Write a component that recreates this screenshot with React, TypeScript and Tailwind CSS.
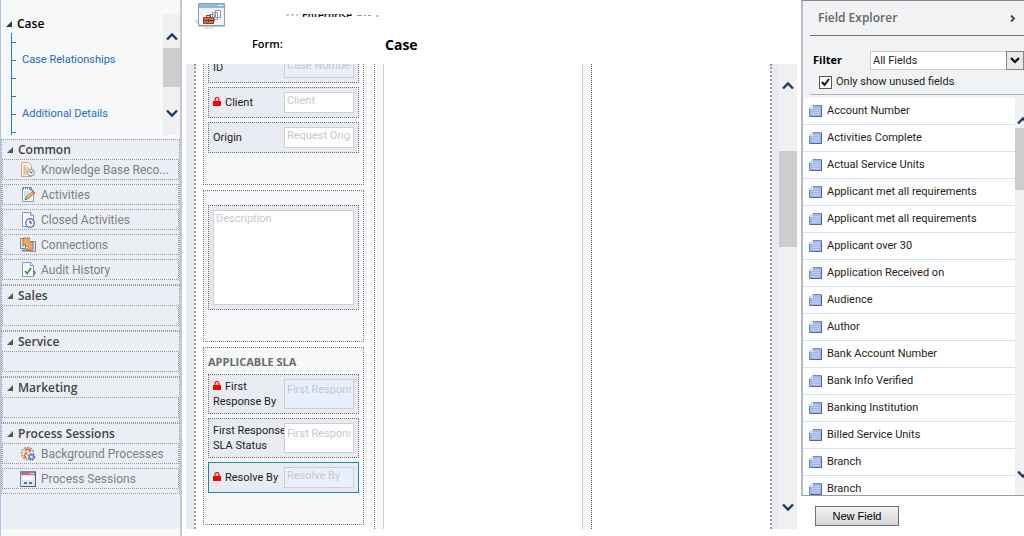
import { useState } from "react";
import type { ReactNode } from "react";

type NavItem = { name: string; icon: ReactNode };
type Field = { id: string; label: string; placeholder: string; locked?: boolean; readOnly?: boolean; tall?: boolean; selected?: boolean };

function Page({ children }: { children?: ReactNode }) {
	return (
		<svg className="h-4 w-4 shrink-0" viewBox="0 0 16 16" fill="none" aria-hidden="true">
			<path d="M2.5.5h8l3 3v11h-11z" fill="#f8fbff" stroke="#8b9ab5" />
			<path d="M10.5.5v3h3" fill="#dbe4f1" stroke="#8b9ab5" />
			{children}
		</svg>
	);
}

const icons = {
	knowledge: (
		<svg className="h-4 w-4 shrink-0" viewBox="0 0 16 16" fill="none" aria-hidden="true">
			<path d="M1.5.5h7l3 3v11h-10z" fill="#fdf3dc" stroke="#c8ab83" />
			<path d="M3 4h3M3 6h6M3 8h5M3 10h6M3 12h4M5 3v10" stroke="#d8b47e" />
			<circle cx="11" cy="10.5" r="3.500" fill="#eef3fa" stroke="#8794aa" />
			<path d="M9.500 9l1.500 2 2-1.500" stroke="#40506e" />
		</svg>
	),
	activities: (
		<Page>
			<path d="M3 1.5h9" stroke="#62769a" strokeDasharray="1 1" strokeWidth="2" />
			<path d="M4 5h6M4 7h5M4 9h4M4 11h3" stroke="#a9bcdb" />
			<path d="M5 13l1-3 7-6 2 2-7 6z" fill="#f2b652" stroke="#9a7440" strokeWidth=".7" />
			<path d="M12 5l1.200-1.200 2 2L14 7z" fill="#d8604c" />
			<path d="M5 13l.5-1.500 1 1z" fill="#333" />
		</Page>
	),
	closed: (
		<Page>
			<circle cx="10" cy="11" r="4.300" fill="#edf0ff" stroke="#6065b0" strokeWidth="1.200" />
			<path d="M10 8.500V11h2" stroke="#343b80" />
		</Page>
	),
	connections: (
		<svg className="h-4 w-4 shrink-0" viewBox="0 0 16 16" fill="none" aria-hidden="true">
			<path d="M.5 1.500h5v10h-5zM10.500 4.500h5v10h-5z" fill="#d5e2f2" stroke="#6d87ad" />
			<path d="M2 13.500h9" stroke="#6d87ad" strokeWidth="2" />
			<path d="M3 1h7L8.500 3l3 3L13 5v8H6l2-2.500-3-3L3 9z" fill="#f2a860" stroke="#a8642b" strokeWidth=".8" />
		</svg>
	),
	audit: (
		<Page>
			<path d="M13.500 8.500l1.500 2-1.500 3" stroke="#68789a" strokeWidth="1.500" />
			<path d="M5 9l2.200 2.500L11 6" stroke="#3f9a3c" strokeWidth="1.800" />
		</Page>
	),
	background: (
		<svg className="h-4 w-4 shrink-0" viewBox="0 0 16 16" fill="none" aria-hidden="true">
			<circle cx="7.500" cy="7.500" r="6" fill="#f6e8dc" stroke="#a58d80" strokeDasharray="2 1" strokeWidth="1.500" />
			<path d="M5 5l2-2 3 1M4 9l2 3M9 6l2-2" stroke="#d9583c" strokeWidth="1.500" />
			<circle cx="6" cy="7.500" r="1.500" fill="#e37a57" />
			<circle cx="11.500" cy="11" r="3" fill="#7fa0dd" stroke="#4d70b5" strokeDasharray="1.500 1" strokeWidth="1.500" />
			<circle cx="11.500" cy="11" r="1" fill="#fff" />
		</svg>
	),
	sessions: (
		<svg className="h-4 w-4 shrink-0" viewBox="0 0 16 16" fill="none" aria-hidden="true">
			<path d="M.5.5h15v15H.5z" fill="#dfe6f2" stroke="#7585a5" />
			<path d="M1 1h14v3H1z" fill="#c46a8c" />
			<path d="M10 2.500h4" stroke="#fff" strokeDasharray="1 .5" />
			<path d="M2.500 5.500h11v3h-11z" fill="#fff" />
			<path d="M4 11h3v2H4zM9 11h3v2H9z" fill="#5b6f98" />
			<path d="M1 15.500h15M15.500 1v15" stroke="#4c5c7d" />
		</svg>
	),
};

const navGroups: { name: string; items: NavItem[] }[] = [
	{
		name: "Common",
		items: [
			{ name: "Knowledge Base Reco...", icon: icons.knowledge },
			{ name: "Activities", icon: icons.activities },
			{ name: "Closed Activities", icon: icons.closed },
			{ name: "Connections", icon: icons.connections },
			{ name: "Audit History", icon: icons.audit },
		],
	},
	{ name: "Sales", items: [] },
	{ name: "Service", items: [] },
	{ name: "Marketing", items: [] },
	{
		name: "Process Sessions",
		items: [
			{ name: "Background Processes", icon: icons.background },
			{ name: "Process Sessions", icon: icons.sessions },
		],
	},
];

const treeRows = ["", "Case Relationships", "", "", "Additional Details", ""];

const caseFields: Field[] = [
	{ id: "case-id", label: "ID", placeholder: "Case Number", readOnly: true },
	{ id: "client", label: "Client", placeholder: "Client", locked: true },
	{ id: "origin", label: "Origin", placeholder: "Request Origin" },
];

const slaFields: Field[] = [
	{ id: "first-response", label: "First\nResponse By", placeholder: "First Response By", locked: true, readOnly: true, tall: true },
	{ id: "sla-status", label: "First Response\nSLA Status", placeholder: "First Response SLA", tall: true },
	{ id: "resolve-by", label: "Resolve By", placeholder: "Resolve By", locked: true, readOnly: true, selected: true },
];

const explorerFields = [
	"Account Number",
	"Activities Complete",
	"Actual Service Units",
	"Applicant met all requirements",
	"Applicant met all requirements",
	"Applicant over 30",
	"Application Received on",
	"Audience",
	"Author",
	"Bank Account Number",
	"Bank Info Verified",
	"Banking Institution",
	"Billed Service Units",
	"Branch",
	"Branch",
];

function Triangle({ className }: { className: string }) {
	return (
		<svg className={`h-1.5 w-1.5 shrink-0 ${className}`} viewBox="0 0 6 6" aria-hidden="true">
			<path d="M6 0v6H0z" fill="currentColor" />
		</svg>
	);
}

function Chevron({ down = false }: { down?: boolean }) {
	return (
		<svg className="h-[9px] w-3 shrink-0" viewBox="0 0 12 9" fill="none" aria-hidden="true">
			<path d={down ? "M1 1.500l5 5 5-5" : "M1 7.500l5-5 5 5"} stroke="#1f3a5f" strokeWidth="2.400" />
		</svg>
	);
}

function Lock() {
	return (
		<svg className="mr-1 inline-block h-[9px] w-2 align-baseline" viewBox="0 0 8 9" fill="none" aria-label="Locked">
			<path d="M2 4V2.500a2 2 0 0 1 4 0V4" stroke="#f00" strokeWidth="1.200" />
			<path d="M0 4h8v5H0z" fill="#f00" />
		</svg>
	);
}

function FieldRow({ field }: { field: Field }) {
	return (
		<div
			className={`flex items-center border bg-[#e8ebf1] px-1 ${field.tall ? "h-10" : "h-[31px]"} ${
				field.selected ? "border-solid border-[#1a86ae]" : "border-dotted border-[#6f6f6f]"
			}`}
		>
			<label htmlFor={field.id} className="w-[71px] shrink-0 leading-[15px] whitespace-pre">
				{field.locked && <Lock />}
				{field.label}
			</label>
			<input
				id={field.id}
				type="text"
				placeholder={field.placeholder}
				readOnly={field.readOnly}
				className={`min-w-0 flex-1 border border-[#cfcfcf] px-0.5 placeholder:text-[#c6c8cc] focus:outline-none ${
					field.tall ? "h-[30px] pb-2.5" : "h-[21px] pb-1"
				} ${field.readOnly ? "bg-[#e9f0fd]" : "bg-white"}`}
			/>
		</div>
	);
}

function Sidebar() {
	return (
		<aside className="flex w-[182px] shrink-0 flex-col border-r-2 border-l border-r-[#c5c8cf] border-l-[#a9c6ea] bg-[#f6f8fa]">
			<div className="flex h-[139px] shrink-0 pt-3.5 pb-1">
				<div className="min-w-0 flex-1 overflow-hidden">
					<div className="flex h-[19px] items-center gap-[5px] pl-[5px] font-['Open_Sans','Noto_Sans',sans-serif] text-[12px] font-semibold text-black">
						<Triangle className="text-[#333]" />
						Case
					</div>
					<ul className="ml-2.5 border-l border-[#1a7fd0]">
						{treeRows.map((row, i) => (
							<li key={i} className="flex h-[18px] items-center">
								<span className="mr-1.5 h-px w-1 bg-[#1a7fd0]" />
								{row && (
									<a href="#" className="text-[11px] text-[#2a68bd]">
										{row}
									</a>
								)}
							</li>
						))}
					</ul>
				</div>
				<div className="flex w-[17px] shrink-0 flex-col items-center bg-[#f0f0f0] pt-[18px] pb-[17px]">
					<Chevron />
					<div className="mt-[7px] h-[39px] w-full bg-[#cdcdcd]" />
					<div className="flex-1" />
					<Chevron down />
				</div>
			</div>
			<nav className="mb-[7px] min-h-0 flex-1 overflow-hidden bg-[#ebeff5]">
				{navGroups.map((group) => (
					<section key={group.name} className="border border-dotted border-[#999]">
						<h2 className="flex h-[19px] items-center gap-[5px] pl-[5px] font-['Open_Sans','Noto_Sans',sans-serif] text-[12px] font-semibold text-[#444]">
							<Triangle className="text-[#555]" />
							{group.name}
						</h2>
						<ul className="flex flex-col gap-1 pb-1">
							{group.items.length === 0 && <li className="h-[21px] border border-dotted border-[#999]" />}
							{group.items.map((item) => (
								<li key={item.name} className="flex h-[21px] items-center border border-dotted border-[#999] pl-[17px]">
									<a href="#" className="flex items-center gap-[5px] text-[12px] whitespace-nowrap text-[#808080]">
										{item.icon}
										{item.name}
									</a>
								</li>
							))}
						</ul>
					</section>
				))}
			</nav>
		</aside>
	);
}

function FormIcon() {
	return (
		<svg className="h-[27px] w-8 shrink-0" viewBox="0 0 32 27" fill="none" aria-hidden="true">
			<path d="M0 19l4-3v7z" fill="#e3e3e3" />
			<path d="M4.500 1.500h26v22h-26z" fill="#eef4fa" stroke="#8ea0b3" />
			<path d="M5 2h25v4H5z" fill="#8db8e0" />
			<path d="M24 3.500h5" stroke="#fff" strokeDasharray="1.500 .5" />
			<path d="M21.500 8.500h5v7h-5zM18.500 10.500h5v7h-5zM15.500 12.500h5v7h-5z" fill="#fff" stroke="#8198b5" />
			<path d="M12.500 15v-1.500h4V15" stroke="#8a4520" />
			<path d="M9.500 15.500h10v6h-10z" fill="#d9703c" stroke="#8a4520" />
			<path d="M9.500 18.500h10M14.500 17v3" stroke="#6e3415" />
			<path d="M4 24.500h27" stroke="#c4cbd2" />
			<path d="M10 26h9" stroke="#f2c3aa" />
		</svg>
	);
}

function FormEditor() {
	return (
		<main className="flex min-w-0 flex-1 flex-col pr-1 pb-[7px] pl-1">
			<header className="flex h-16 shrink-0 flex-col font-['Open_Sans','Noto_Sans',sans-serif]">
				<div className="flex h-[31px] items-start pt-0.5 pl-2">
					<FormIcon />
					<div className="mt-3 ml-[60px] flex h-[3px] items-start gap-1 overflow-hidden">
						<svg className="h-[3px] w-3" viewBox="0 0 12 3" aria-hidden="true">
							<path d="M0 1h3M5 1h3M10 1h2" stroke="#999" />
						</svg>
						<span className="-mt-[5px] text-[10px] leading-3 font-semibold text-black">Enterprise</span>
						<svg className="h-[3px] w-6" viewBox="0 0 24 3" aria-hidden="true">
							<path d="M1 1.500h5M8 1.500h2M12 1.500h3M20 2h3" stroke="#999" />
						</svg>
					</div>
				</div>
				<div className="flex h-[27px] items-center pl-[66px] text-black">
					<span className="w-[133px] text-[11px] font-semibold">Form:</span>
					<h1 className="text-[14px] font-bold">Case</h1>
				</div>
			</header>
			<div className="flex min-h-0 flex-1">
				<div className="w-2 shrink-0 bg-[#e8ecf1]" />
				<div className="flex min-w-0 flex-1 border-x-2 border-dotted border-[#999]">
					<div className="ml-[7px] flex w-[161px] shrink-0 flex-col justify-end gap-[5px] overflow-hidden pb-1 text-[11px] text-[#222]">
						<section className="flex shrink-0 flex-col gap-1 border border-dotted border-[#777] bg-[#f6f8fa] px-1 pt-1 pb-[31px]">
							{caseFields.map((field) => (
								<FieldRow key={field.id} field={field} />
							))}
						</section>
						<section className="shrink-0 border border-dotted border-[#777] bg-[#f6f8fa] px-1 pt-3.5 pb-[31px]">
							<div className="flex border border-dotted border-[#6f6f6f] bg-[#e8ebf1] p-1">
								<textarea
									aria-label="Description"
									placeholder="Description"
									className="h-[95px] min-w-0 flex-1 resize-none border border-[#cfcfcf] bg-white px-0.5 leading-[15px] placeholder:text-[#c6c8cc] focus:outline-none"
								/>
							</div>
						</section>
						<section className="flex shrink-0 flex-col gap-1 border border-dotted border-[#777] bg-[#f6f8fa] px-1 pb-[31px]">
							<h2 className="pt-1.5 font-['Open_Sans','Noto_Sans',sans-serif] text-[11px] leading-4 font-bold text-[#6b6b63]">
								APPLICABLE SLA
							</h2>
							{slaFields.map((field) => (
								<FieldRow key={field.id} field={field} />
							))}
						</section>
					</div>
					<div className="ml-2.5 w-2.5 shrink-0 border-r border-l border-l-[#777] border-r-[#c9ccd1] bg-[#f6f8fa] [border-left-style:dotted]" />
					<div className="min-w-0 flex-1" />
					<div className="w-2.5 shrink-0 border-r border-l border-r-[#555] border-l-[#c9ccd1] bg-[#f6f8fa] [border-right-style:dotted]" />
					<div className="w-[178px] shrink-0" />
				</div>
				<div className="w-[7px] shrink-0 bg-[#e8ecf1]" />
				<div className="flex w-[18px] shrink-0 flex-col items-center bg-[#f0f0f0] py-[17px]">
					<Chevron />
					<div className="mt-[61px] h-24 w-full bg-[#cdcdcd]" />
					<div className="flex-1" />
					<Chevron down />
				</div>
			</div>
		</main>
	);
}

function FieldIcon() {
	return (
		<svg className="h-3 w-[13px] shrink-0" viewBox="0 0 13 12" fill="none" aria-hidden="true">
			<path d="M4 .5h8.500v11H.5V4z" fill="#9fb8e8" stroke="#7088ba" />
			<path d="M12.500 1v10.500H1" stroke="#4f66a0" />
			<path d="M.5 4H4V.5z" fill="#dde7f8" />
			<path d="M5 3.500h6M3 5.500h8M3 7.500h8M3 9.500h8" stroke="#bccff2" />
		</svg>
	);
}

function FieldExplorer() {
	const [unusedOnly, setUnusedOnly] = useState(true);

	return (
		<aside className="flex w-[223px] shrink-0 flex-col text-[11px] text-[#222]">
			<div className="flex min-h-0 flex-1 flex-col border-t border-b border-l-2 border-t-[#85858f] border-b-[#9a9aa5] border-l-[#b9bac3] bg-[#f1f2f4]">
				<div className="ml-[7px] flex h-[35px] shrink-0 items-center justify-between border-b border-[#707078] pr-2 pl-2">
					<h2 className="font-['Open_Sans','Noto_Sans',sans-serif] text-[12px] font-semibold text-[#666]">Field Explorer</h2>
					<button type="button" aria-label="Collapse">
						<svg className="h-[7px] w-[6px]" viewBox="0 0 6 7" fill="none" aria-hidden="true">
							<path d="M1 .5l3 3-3 3" stroke="#444" strokeWidth="1.800" />
						</svg>
					</button>
				</div>
				<div className="ml-[7px] flex h-[59px] shrink-0 flex-col border-b border-[#a9b3c0] pt-[15px]">
					<div className="flex items-center">
						<label
							htmlFor="filter"
							className="w-[60px] pl-[3px] font-['Open_Sans','Noto_Sans',sans-serif] font-bold text-black"
						>
							Filter
						</label>
						<div className="relative flex-1">
							<select id="filter" className="block h-[19px] w-full appearance-none border border-[#ccc] bg-white pl-0.5 text-[11px] leading-none">
								<option>All Fields</option>
							</select>
							<span className="pointer-events-none absolute inset-y-0 right-0 flex w-[18px] items-center justify-center border border-[#888] bg-[#e9e9e9]">
								<svg className="h-[7px] w-2.5" viewBox="0 0 10 7" fill="none" aria-hidden="true">
									<path d="M1 1l4 4 4-4" stroke="#000" strokeWidth="2" />
								</svg>
							</span>
						</div>
					</div>
					<label className="mt-1 flex items-center gap-1 pl-[9px]">
						<span className="relative flex">
							<input
								type="checkbox"
								checked={unusedOnly}
								onChange={(e) => setUnusedOnly(e.target.checked)}
								className="h-[13px] w-[13px] appearance-none border border-[#555] bg-white"
							/>
							{unusedOnly && (
								<svg className="pointer-events-none absolute inset-0 h-[13px] w-[13px]" viewBox="0 0 13 13" fill="none" aria-hidden="true">
									<path d="M3 6l2.500 3L10 3" stroke="#111" strokeWidth="2" />
								</svg>
							)}
						</span>
						Only show unused fields
					</label>
				</div>
				<div className="mt-[3px] flex min-h-0 flex-1 overflow-hidden bg-white">
					<ul className="min-w-0 flex-1">
						{explorerFields.map((name, i) => (
							<li key={i} className="flex h-[27px] items-center gap-[5px] border-b border-[#cfe2fa] pl-1.5">
								<FieldIcon />
								{name}
							</li>
						))}
					</ul>
					<div className="flex w-[9px] shrink-0 flex-col overflow-hidden bg-[#f0f0f0] pt-[18px] pb-4">
						<span className="pl-0.5">
							<Chevron />
						</span>
						<div className="mt-[3px] h-[62px] w-full shrink-0 bg-[#cdcdcd]" />
						<div className="flex-1" />
						<span className="pl-0.5">
							<Chevron down />
						</span>
					</div>
				</div>
			</div>
			<div className="h-10 shrink-0 pt-2.5 pl-3.5">
				<button
					type="button"
					className="block h-5 w-[84px] border border-[#707070] bg-linear-to-b from-[#f3f3f3] to-[#d6d6d6] font-['Liberation_Sans',sans-serif] text-[11px] leading-none text-black"
				>
					New Field
				</button>
			</div>
		</aside>
	);
}

export default function App() {
	return (
		<div className="flex h-screen overflow-hidden bg-white font-['Roboto','Noto_Sans',sans-serif]">
			<Sidebar />
			<FormEditor />
			<FieldExplorer />
		</div>
	);
}
